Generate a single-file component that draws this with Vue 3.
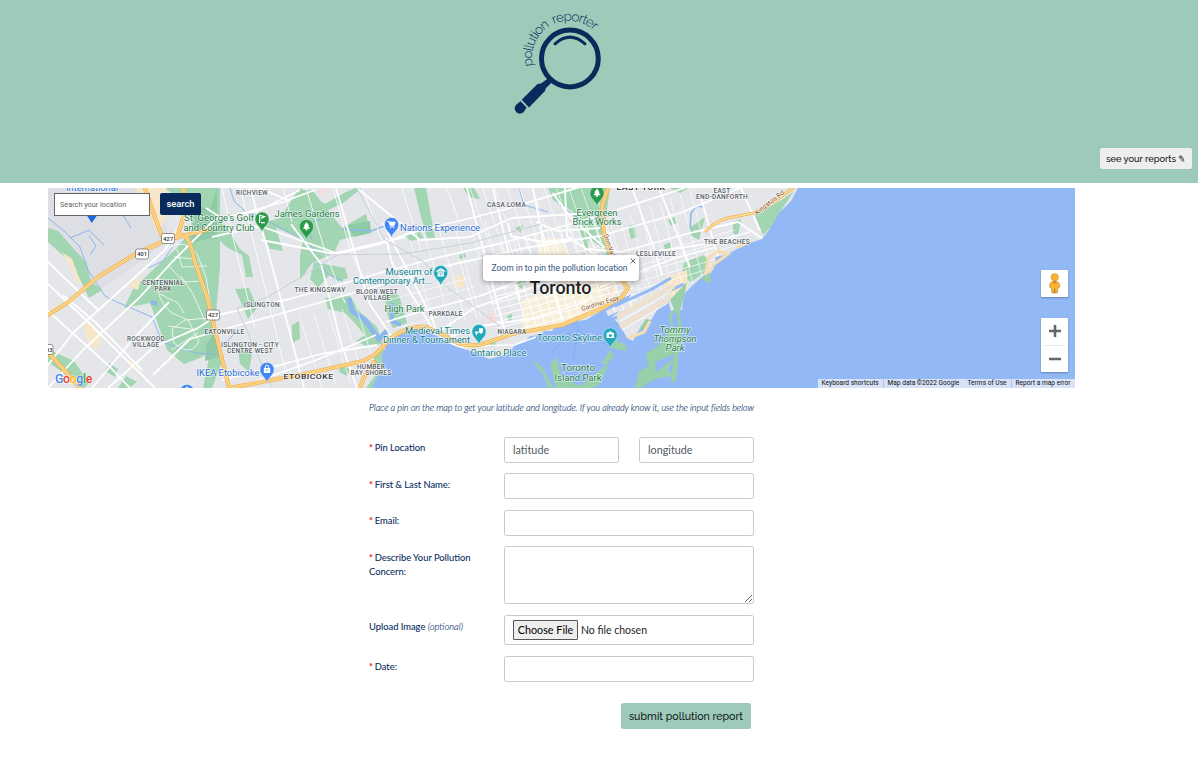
<script setup>
const labels = [
  { x: 92, y: 190.5, t: 'International', c: 'poi blue', w: 52 },
  { x: 219, y: 221, t: "St. George's Golf", c: 'poi green', w: 70 },
  { x: 219, y: 231, t: 'and Country Club', c: 'poi green', w: 71 },
  { x: 307, y: 217, t: 'James Gardens', c: 'poi green', w: 65 },
  { x: 252, y: 194.5, t: 'RICHVIEW', c: 'area', w: 32 },
  { x: 163, y: 285, t: 'CENTENNIAL', c: 'area', w: 42 },
  { x: 163, y: 291, t: 'PARK', c: 'area', w: 17 },
  { x: 146, y: 341, t: 'ROCKWOOD', c: 'area', w: 38 },
  { x: 146, y: 347, t: 'VILLAGE', c: 'area', w: 27 },
  { x: 262, y: 307, t: 'ISLINGTON', c: 'area', w: 36 },
  { x: 224.5, y: 333.5, t: 'EATONVILLE', c: 'area', w: 40 },
  { x: 250, y: 347, t: 'ISLINGTON - CITY', c: 'area', w: 58 },
  { x: 250, y: 353, t: 'CENTRE WEST', c: 'area', w: 46 },
  { x: 228, y: 376, t: 'IKEA Etobicoke', c: 'poi blue', w: 63 },
  { x: 308.5, y: 379, t: 'ETOBICOKE', c: 'big', w: 50 },
  { x: 320, y: 292, t: 'THE KINGSWAY', c: 'area', w: 51 },
  { x: 377, y: 294, t: 'BLOOR WEST', c: 'area', w: 42 },
  { x: 377, y: 300, t: 'VILLAGE', c: 'area', w: 27 },
  { x: 404.5, y: 312, t: 'High Park', c: 'poi green', w: 40 },
  { x: 445.5, y: 316, t: 'PARKDALE', c: 'area', w: 34 },
  { x: 440, y: 231, t: 'Nations Experience', c: 'poi blue', w: 80 },
  { x: 409, y: 274.5, t: 'Museum of', c: 'poi teal', w: 47 },
  { x: 392.5, y: 284, t: 'Contemporary Art...', c: 'poi teal', w: 79 },
  { x: 506.5, y: 206.5, t: 'CASA LOMA', c: 'area', w: 39 },
  { x: 437.5, y: 333.5, t: 'Medieval Times', c: 'poi teal', w: 65 },
  { x: 426.5, y: 343, t: 'Dinner & Tournament', c: 'poi teal', w: 87 },
  { x: 512, y: 333.5, t: 'NIAGARA', c: 'area', w: 29 },
  { x: 498.5, y: 356, t: 'Ontario Place', c: 'poi teal', w: 56 },
  { x: 371, y: 368.5, t: 'HUMBER', c: 'area', w: 28 },
  { x: 371, y: 374.5, t: 'BAY SHORES', c: 'area', w: 41 },
  { x: 597, y: 215.5, t: 'Evergreen', c: 'poi green', w: 41 },
  { x: 597, y: 225, t: 'Brick Works', c: 'poi green', w: 49 },
  { x: 641, y: 189.5, t: 'EAST YORK', c: 'area heavy', w: 49 },
  { x: 722, y: 192.5, t: 'EAST', c: 'area', w: 17 },
  { x: 722, y: 198.5, t: 'END-DANFORTH', c: 'area', w: 52 },
  { x: 727, y: 244, t: 'THE BEACHES', c: 'area', w: 46 },
  { x: 656, y: 256, t: 'LESLIEVILLE', c: 'area', w: 40 },
  { x: 560.5, y: 294.3, t: 'Toronto', c: 'city', w: 62 },
  { x: 569.5, y: 341, t: 'Toronto Skyline', c: 'poi teal', w: 65 },
  { x: 578, y: 371, t: 'Toronto', c: 'poi green', w: 34 },
  { x: 578, y: 380.5, t: 'Island Park', c: 'poi green', w: 47 },
  { x: 675, y: 332.5, t: 'Tommy', c: 'poi green slant', w: 31 },
  { x: 675, y: 341.5, t: 'Thompson', c: 'poi green slant', w: 43 },
  { x: 675, y: 351, t: 'Park', c: 'poi green slant', w: 19 },
]
const pins = [
  { x: 262, y: 219, c: '#2c9a4b', k: 'golf' },
  { x: 306.5, y: 226.5, c: '#2c9a4b', k: 'tree' },
  { x: 597, y: 193, c: '#2c9a4b', k: 'tree' },
  { x: 391.5, y: 224.5, c: '#4285f4', k: 'cart' },
  { x: 440.7, y: 272.5, c: '#20a8bb', k: 'museum' },
  { x: 479, y: 331.5, c: '#20a8bb', k: 'masks' },
  { x: 610.3, y: 335, c: '#20a8bb', k: 'camera' },
  { x: 267, y: 369.5, c: '#4285f4', k: 'bag' },
  { x: 187, y: 391.5, c: '#4285f4', k: 'bag' },
]
const shields = [
  { x: 168, y: 238.5, t: '427', w: 13 },
  { x: 142, y: 254, t: '401', w: 13 },
  { x: 213, y: 315, t: '427', w: 13 },
  { x: 47.5, y: 349.5, t: '403', w: 11 },
]
// A run of parallel streets: count lines, each shifted by (sx, sy) from the first.
function run(x1, y1, x2, y2, sx, sy, count) {
  let d = ''
  for (let i = 0; i < count; i++) d += `M${x1 + sx * i} ${y1 + sy * i}L${x2 + sx * i} ${y2 + sy * i}`
  return d
}
const downtown =
  run(488, 292, 625, 258, 1.6, 6, 8) +
  run(500, 243, 530, 334, 8.5, -2.2, 13) +
  run(540, 262, 600, 246, 1.4, 5, 4)
const minor =
  run(385, 301, 470, 278, 4, 9, 4) +
  run(410, 240, 436, 330, 15, -4, 6) +
  run(470, 188, 496, 262, 12, -1, 11) +
  run(610, 222, 634, 312, 10, -4, 9) +
  run(625, 262, 735, 230, 3, 7, 5) +
  run(300, 318, 322, 388, 14, -3, 5)
const fields = ['latitude', 'longitude']
</script>

<template>
  <div class="page">
    <header class="top">
      <svg class="logo" viewBox="500 0 120 120" width="120" height="120">
        <path id="arc" d="M532.9 66A37 37 0 0 1 603.8 45.3" fill="none" />
        <text class="brand"><textPath href="#arc">pollution reporter</textPath></text>
        <circle cx="569.9" cy="58.5" r="28.4" fill="none" stroke="#082b5c" stroke-width="5" />
        <path d="M555 43.8Q570 30.5 585 43.8" fill="none" stroke="#082b5c" stroke-width="3" stroke-linecap="round" />
        <path d="M549.3 77.5L553 81.2L545.8 88.2L545 91L529 107.4L521.7 99.8L537.5 84L541 83.6Z" fill="#082b5c" />
        <path d="M520.6 101.2L526.6 107.4L524.4 111A5.2 5.2 0 1 1 517 104.1Z" fill="#082b5c" />
      </svg>
      <button class="reports">see your reports <span class="pencil">✎</span></button>
    </header>

    <section class="map">
      <svg class="canvas" viewBox="48 188 1027 200" width="1027" height="200">
        <rect x="48" y="188" width="1027" height="200" fill="#e4e6ea" />
        <path d="M48 188H155L170 240L100 290L72 252L48 235Z" fill="#dddfe5" />

        <g fill="#a2d5b2">
          <path d="M48 228L58 231L72 247L86 262L91 281L102 290L89 298L78 275L67 259L48 242Z" />
          <path d="M164 188H220V266L213 350L200 358L184 364L167 350L160 330L150 303L124 308L133 289L157 266L176 249L192 229L190 205Z" />
          <path d="M218 219L231 233L239 248L249 256L253 277L246 277L242 255L228 248L218 239Z" />
          <path d="M259 224L280 218L298 190H312L323 204L342 228L366 214L370 232L340 240L334 253L312 263L300 280V256L303 239L276 228L283 251L270 249Z" />
          <path d="M314 262L345 268L348 278L337 282L330 274L318 288L310 279Z" />
          <path d="M325 298L350 296L360 312L377 327L383 344L366 346L356 341L365 335L352 320L345 313L328 309Z" />
          <path d="M384 292L399 295L407 323L393 328L388 317Z" />
          <path d="M414 188H426L435 238L427 238L420 213Z" />
          <path d="M300 188L325 204L346 192L355 188H362L343 203L322 213L300 207Z" />
          <path d="M548 188H610L604 231L614 252L608 269L602 248L589 238L588 253L581 238L572 211L553 200Z" />
          <path d="M763 235L755 215L783 199L794 191L782 209L774 224Z" />
          <path d="M670 188H688L680 193ZM628 227L634 224L637 237L631 239ZM664 245L670 242L671 253L665 251Z" />
          <path d="M684 263L703 254L710 263L704 273L691 282L681 276Z" />
          <path d="M48 349L74 361L89 383L84 388H77L65 374L48 362ZM109 363L118 369L115 377L105 371ZM126 376L137 382L129 388H118Z" />
          <path d="M235 289L249 288L257 308L248 319L243 307ZM210 353L224 356L212 388H203Z" />
          <path d="M373 354L384 349L386 362L378 384L372 388H366L377 373Z" />
          <path d="M238 349L252 354L249 372L240 364ZM340 366L350 368L347 376L339 372ZM292 325L299 321L300 339L292 343Z" />
          <path d="M691 227L705 217L699 240L690 235ZM463 188L474 188L480 199L469 197ZM520 278L526 282L522 289L516 284Z" />
          <path d="M406 236L420 232L424 238L410 241ZM458 256L465 253L466 257L459 260ZM515 228L523 225L521 233Z" />
          <path d="M507 316L512 314L512 320L508 321ZM489 342L495 340L496 346L490 347ZM668 220L675 217L677 223L671 226ZM733 222L741 219L738 236L733 233Z" />
        </g>
        <g fill="#8fcaa7">
          <path d="M196 205L210 210L217 188V239L210 238L190 244ZM206 345L217 329L219 357L205 361Z" />
          <path d="M348 225L370 221L371 233L354 237Z" />
        </g>
        <g fill="#f7e7ca">
          <path d="M135 188H166L171 207L158 235L149 211ZM62 252L72 259L83 288L77 281Z" />
          <path d="M83 326L91 322L102 337L97 350L89 344ZM128 286L142 275L138 290ZM127 358L138 366L134 371Z" />
          <path d="M455 276L463 275L464 286L456 288ZM665 277L687 270L688 289L673 298L665 294Z" />
        </g>
        <g fill="#f8efd9">
          <path d="M522 300L545 292L605 269L618 291L607 309L577 321L530 333L522 325Z" />
          <path d="M539 240L556 237L570 255L566 274L552 276L537 259Z" />
        </g>
        <path d="M552 283L615 264L640 256L612 290Z" fill="#eee1d0" />
        <path d="M487 315L496 313V321L488 323ZM316 190L326 188L322 197ZM603 291L613 290L610 299Z" fill="#f4dcdc" />

        <g fill="none" stroke="#8cb7ee" stroke-width="1">
          <path d="M48 218L64 231L80 247L88 270L105 296L117 302L152 317L162 342L191 352L214 355L238 330" />
          <path d="M70 238L89 230L104 245M89 236L96 246L90 255M103 198L118 207L131 228M148 268L163 261L174 245" />
          <path d="M230 188L234 201L246 212L258 216L285 230L311 245L318 262L329 275L343 281M312 240L306 224L322 219" />
          <path d="M343 229L371 231L390 224M690 230L691 213L697 206L703 207" stroke-width="1.6" />
          <path d="M349 298L352 311L365 320L372 330L379 339L388 330" stroke-width="5" />
          <path d="M392 303V321L401 325M151 302L157 304" stroke-width="4" />
          <path d="M519 188L524 205L548 212M560 205L583 222L604 215" />
        </g>

        <g fill="none" stroke="#fff" opacity=".85">
          <path :d="minor" stroke-width=".8" />
          <path :d="downtown" stroke-width="1.2" />
          <path stroke-width=".9" d="M169 248Q185 238 197 254L206 277L211 307L219 349M174 257L194 259L203 290M159 278Q154 299 172 313L188 320L199 341Q191 358 174 343L172 329L185 320L209 318M160 294L178 303L184 313M181 276L193 294L205 321M169 266L184 282L202 281M177 249L182 267L207 266M168 326L198 330M171 350L198 333" />
          <path stroke-width="1" d="M222 188L237 255L255 328M240 188L260 267L286 374M283 188L292 222M306 188L325 251L345 303M333 188L351 253L375 300M362 188L383 243M402 188L421 250M447 188L458 219M458 255L477 319" />
        </g>
        <g fill="none" stroke="#fff" stroke-width="1.8" stroke-linejoin="round">
          <path d="M48 284L86 320L155 388M48 311L109 366L130 388M63 295L95 322L142 370M48 365L74 332L143 270L165 250L177 230M92 388L133 339L169 302M108 388L154 347L198 328L218 315L290 299L383 272L440 257L502 243L592 218L660 196L685 188" />
          <path d="M48 262L98 310M153 375L190 339L214 332L290 311L350 294L446 266L525 248L600 236L680 213L714 199L740 188" />
          <path d="M48 388L83 350L139 298L172 262L215 219L260 210L300 190M206 208L223 219L290 200M212 237L260 226L336 253L405 237" />
          <path d="M250 188L267 247L291 337L304 388M291 224L321 264L341 343L357 388M336 188L369 303L392 337M261 240L335 254L380 244L410 233L503 210L600 181" />
          <path d="M357 188L405 227L420 240L470 237L487 229L512 218L590 213" />
          <path d="M386 238L392 263L433 329M383 223L430 314L438 334M467 188L505 332M493 188L520 300M533 188L548 266L562 320M565 188L567 236L603 260M588 249L621 252L694 232L738 222L763 239M632 188L655 251L662 275M659 188L690 267" />
          <path d="M700 194L716 251L719 263M741 188L760 231M589 264L625 256L700 245L750 232M600 287L675 258L713 248" />
          <path d="M383 345L430 337L476 307L541 285L618 263M386 322L430 309L480 296L531 276M426 345L482 326L534 318L588 301" />
          <path d="M259 188L288 200L315 190M222 380L284 364L321 354L377 345M254 382L314 361L376 335" />
          <path d="M536 222L557 231L600 228M508 223L511 236L543 242L572 239M553 193L570 217L605 248" />
        </g>
        <path d="M357 188L384 239L424 262L447 287L500 326M321 255L404 254L470 243L541 224M272 388L237 308L268 297L337 255" fill="none" stroke="#cbd0d7" stroke-width="1" />

        <!-- lake -->
        <path fill="#92b9f6" d="M798 188L791 201L779 213L769 230L762 239L750 243L737 249L728 254L716 257L713 270L703 276L693 285L684 294L682 310L671 311L668 300L657 310L650 322L638 331L633 341L627 338L620 325L612 317L620 311L608 316L606 311L628 300L631 294L604 309L586 320L576 321L573 323L566 322L563 327L557 325L552 331L544 331L541 335L530 336L524 342L514 346L509 354L489 359L477 353L457 347L443 339L427 331L413 328L399 335L387 344L382 355L383 366L391 373L378 375L372 388H1075V188Z" />
        <path d="M611 320L656 297L684 284M615 306L652 289L671 278" stroke="#92b9f6" stroke-width="3" fill="none" />
        <path d="M620 327L672 297M617 317L674 286" stroke="#eee1d0" stroke-width="5" fill="none" />
        <path d="M620 321L640 310L672 290M622 330L668 303" stroke="#fff" stroke-width="1" fill="none" />
        <g fill="#98d0aa">
          <path d="M670 300L687 282L684 297L680 311L682 339L679 351L676 382L671 382L673 361L668 369L672 376L655 379L640 388H635L639 371L648 367L646 353L658 346L671 328L669 315L674 309Z" />
          <path d="M613 339L626 345L626 351L611 348ZM601 364L610 350L614 356L607 364ZM550 364L557 357L561 377L580 386L600 370L609 363L600 384L592 388H556Z" />
          <path d="M531 359L544 376L548 388H554L542 367Z" />
          <path d="M701 278L710 273L711 284L704 281ZM639 329L646 319L651 320L646 330Z" />
        </g>
        <g fill="#92b9f6">
          <path d="M672 314L677 312L678 325L673 332ZM675 354L672 360L656 372L655 362Z" />
        </g>
        <path d="M628 338L644 332L650 321M706 275L708 258L718 251L728 254L713 265L709 273M750 242L737 247" stroke="#f5deb1" stroke-width="3" fill="none" />
        <path d="M508 350L492 355L478 350" stroke="#efe4cc" stroke-width="4" fill="none" />
        <path d="M571 325L578 323L579 332L610 346M577 326L550 355M578 329L573 360" fill="none" stroke="#6c9ce8" stroke-width=".7" stroke-dasharray="2 1.5" />
        <path d="M440 337Q457 350 475 346L514 345L536 337" fill="none" stroke="#fff" stroke-width="1.5" />

        <!-- motorways: dark casing, light core, centre line -->
        <g fill="none" stroke-linejoin="round" stroke-linecap="round">
          <g stroke="#f4b04a" stroke-width="4.2">
            <path id="h1" d="M48 315L67 303L98 277L132 256L164 241L190 234L210 229M145 188L155 218L162 236L184 235Q191 241 194 259L207 297L218 343L229 388M183 188L186 210L178 234" />
            <path id="h2" d="M48 352L65 371L80 388M229 388L305 374L363 361L376 354L388 341Q405 325 426 327L444 335Q462 349 483 344L512 334L562 325L600 309L622 297L628 288L622 280L614 263L604 235L602 206L608 188M360 388L364 377L374 362" />
          </g>
          <g stroke="#fce2a0" stroke-width="2.5"><use href="#h1" /><use href="#h2" /></g>
          <g stroke="#f4b04a" stroke-width=".7"><use href="#h1" /><use href="#h2" /></g>
          <path d="M706 231Q718 218 738 216L754 213L775 201L793 188" stroke="#f4b04a" stroke-width="3" />
          <path d="M706 231Q718 218 738 216L754 213L775 201L793 188" stroke="#fce2a0" stroke-width="1.5" />
        </g>

        <g v-for="s in shields" :key="s.x">
          <rect :x="s.x - s.w / 2" :y="s.y - 5" :width="s.w" height="10" rx="2" fill="#fff" stroke="#777" stroke-width=".8" />
          <text class="shield" :x="s.x" :y="s.y + 2.3">{{ s.t }}</text>
        </g>

        <path d="M87 215.5H97L91.7 223Z" fill="#1a66de" />
        <g v-for="p in pins" :key="p.x" :transform="`translate(${p.x} ${p.y})`">
          <path d="M0 13C-1.2 7.8-7 5.8-7 0A7 7 0 0 1 7 0C7 5.8 1.2 7.8 0 13Z" :fill="p.c" stroke="#fff" stroke-opacity=".55" stroke-width=".6" />
          <path v-if="p.k === 'tree'" d="M0-4.6L2.7-.6H1.7L3.6 2.3H.8V4H-.8V2.3H-3.6L-1.7-.6H-2.7Z" fill="#fff" />
          <path v-else-if="p.k === 'golf'" d="M-2.4 4V-3.8L2.6-2.4L-1.1-.5M-1 3.6H2.8" fill="none" stroke="#fff" stroke-width="1.2" />
          <path v-else-if="p.k === 'cart'" d="M-4-3.2H-2.7L-1.4.7H2.7L3.7-2.4H-2.3ZM-1.8 2.3H3M-1.2 3.6H-.6M2 3.6H2.6" fill="#fff" stroke="#fff" stroke-width="1" />
          <path v-else-if="p.k === 'museum'" d="M-3.6-1.6L0-3.8L3.6-1.6ZM-3.4 3.4H3.4M-2.5-.8V3M2.5-.8V3M-1 3V.3H1V3" fill="none" stroke="#fff" stroke-width="1.1" />
          <path v-else-if="p.k === 'masks'" d="M-4 .1H-.2V2Q-2-.1-2 4Q-4 3.3-4 .1ZM0-3.2H4V-.4Q4 2 2 2.3Q0 2 0-.4Z" fill="#fff" />
          <g v-else-if="p.k === 'camera'"><path d="M-3.8-2.2H-2L-1-3.4H1L2-2.2H3.8V3H-3.8Z" fill="#fff" /><circle cy=".4" r="1.5" :fill="p.c" /></g>
          <g v-else><rect x="-3.2" y="-1.4" width="6.4" height="4.8" rx=".6" fill="#fff" /><path d="M-1.7-1.4V-2.6A1.7 1.7 0 0 1 1.7-2.6V-1.4" fill="none" stroke="#fff" stroke-width="1" /><path d="M-1.4.2Q0 2 1.4.2" fill="none" :stroke="p.c" stroke-width=".7" /></g>
        </g>

        <text v-for="l in labels" :key="l.t + l.y" :x="l.x" :y="l.y" :textLength="l.w" lengthAdjust="spacingAndGlyphs" :class="l.c">{{ l.t }}</text>
        <text class="road" transform="translate(757 215) rotate(-38)" textLength="35">Kingston Rd</text>
        <text class="road" transform="translate(582 311) rotate(-17)" textLength="39">Gardiner Expy</text>
        <text class="road" transform="translate(603.5 235) rotate(71)" textLength="31">Don Valley</text>
      </svg>

      <div class="search">
        <input type="text" placeholder="Search your location" />
        <button>search</button>
      </div>
      <div class="bubble">Zoom in to pin the pollution location
        <svg class="close" viewBox="0 0 6 6" width="6" height="6"><path d="M.6.6L5.4 5.4M5.4.6L.6 5.4" stroke="#444" stroke-width=".8" /></svg>
      </div>
      <div class="google"><i class="b">G</i><i class="r">o</i><i class="y">o</i><i class="b">g</i><i class="g">l</i><i class="r">e</i></div>
      <div class="controls">
        <div class="ctl">
          <svg viewBox="0 0 27 27" width="27" height="27">
            <path d="M10.3 12Q8.2 14 8.6 17L10.5 18.2L11 23H16.3L16.8 18.2L18.8 17Q19 14 17 12Z" fill="#fbb52d" stroke="#a78142" stroke-width=".6" />
            <path d="M11.5 10.8L13.7 14L16 10.8Z" fill="#e8792b" />
            <circle cx="13.7" cy="7.2" r="3.7" fill="#fbb52d" stroke="#b88a3c" stroke-width=".5" />
            <path d="M13.7 18.5V23" stroke="#a36c22" stroke-width=".8" />
          </svg>
        </div>
        <div class="ctl zoom">
          <svg viewBox="0 0 27 54" width="27" height="54">
            <path d="M8 13H20M14 7V19M8 41H20" stroke="#666" stroke-width="2.6" />
            <path d="M4 27.5H24" stroke="#e6e6e6" stroke-width="1" />
          </svg>
        </div>
      </div>
      <div class="credits"><span>Keyboard shortcuts</span><span>Map data ©2022 Google</span><span>Terms of Use</span><span>Report a map error</span></div>
    </section>

    <form class="form">
      <p class="hint">Place a pin on the map to get your latitude and longitude. If you already know it, use the input fields below</p>
      <div class="row">
        <label><b>*</b> Pin Location</label>
        <div class="pair"><input v-for="f in fields" :key="f" type="text" :placeholder="f" /></div>
      </div>
      <div class="row"><label><b>*</b> First &amp; Last Name:</label><input type="text" /></div>
      <div class="row"><label><b>*</b> Email:</label><input type="text" /></div>
      <div class="row"><label><b>*</b> Describe Your Pollution Concern:</label><textarea></textarea></div>
      <div class="row"><label class="upload">Upload Image <em>(optional)</em></label>
        <div class="file"><span class="choose">Choose File</span><span>No file chosen</span></div>
      </div>
      <div class="row"><label><b>*</b> Date:</label><input type="text" /></div>
      <button class="submit" type="button">submit pollution report</button>
    </form>
  </div>
</template>

<style>
html, body { background: #fff; overflow: hidden; }
</style>

<style scoped>
* { box-sizing: border-box; }
.page { width: 1198px; height: 764px; overflow: hidden; font-family: "Lato", sans-serif; color: #082b5c; }
button, input, textarea { font-family: inherit; margin: 0; }
.top { height: 183px; background: #9ecaba; display: flex; flex-direction: column; justify-content: space-between; padding-bottom: 14px; }
.logo { display: block; margin-left: 500px; }
.brand { font: 300 13.4px "Raleway", "Lato", sans-serif; word-spacing: 2.5px; letter-spacing: -.9px; fill: #082b5c; }
.reports { align-self: flex-end; margin-right: 6px; width: 92px; height: 21px; padding: 0; border: 0; border-radius: 2px; background: #eee; color: #111; font: 500 9.25px/21px "Raleway", "Lato", sans-serif; white-space: nowrap; }
.pencil { display: inline-block; font: 9px "DejaVu Sans", sans-serif; transform: rotate(8deg); }

.map { position: relative; width: 1027px; height: 200px; margin: 5px 0 0 48px; font-family: "Roboto", sans-serif; overflow: hidden; }
.canvas { display: block; }
.canvas text { text-anchor: middle; paint-order: stroke; stroke: #fff; stroke-opacity: .7; stroke-width: 1.4px; stroke-linejoin: round; font-family: "Roboto", sans-serif; }
.canvas .area { font-size: 6.4px; font-weight: 500; letter-spacing: .3px; fill: #555b63; }
.canvas .heavy { font-size: 7px; fill: #222; }
.canvas .big { font-size: 7.6px; font-weight: 500; letter-spacing: .4px; fill: #333; }
.canvas .city { font-size: 17.5px; font-weight: 500; fill: #202124; }
.canvas .poi { font-size: 9.6px; }
.canvas .blue { fill: #2a6bd6; }
.canvas .green { fill: #1b7b46; }
.canvas .teal { fill: #0c7d8e; }
.canvas .slant { font-style: italic; }
.canvas .shield { font-size: 6px; font-weight: 500; fill: #333; }
.canvas .road { font-size: 6.5px; fill: #844c20; text-anchor: start; }

.search { position: absolute; left: 6px; top: 5px; display: flex; gap: 10px; align-items: flex-start; }
.search input { width: 96px; height: 23px; border: 1px solid #666; padding: 0 5px; font-size: 7.3px; background: #fff; border-radius: 0; }
.search input::placeholder { color: #666; }
.search button { width: 41px; height: 22px; border: 0; border-radius: 2px; padding: 0 0 1px; background: #082b5c; color: #fff; font-size: 9.3px; font-weight: 500; }
.bubble { position: absolute; left: 435px; top: 67px; width: 156px; height: 26px; padding-left: 8.5px; border-radius: 4px; background: #fff; box-shadow: 0 1px 4px 1px rgba(0, 0, 0, .3); font-size: 8.53px; line-height: 26px; color: #36517e; white-space: nowrap; }
.close { position: absolute; right: 3px; top: 2.5px; }
.google { position: absolute; left: 7px; top: 182px; font: 500 12.4px/18px "Roboto", sans-serif; letter-spacing: -.4px; text-shadow: 0 0 1px #fff, 0 0 2px #fff; }
.google i { font-style: normal; }
.b { color: #4285f4; } .r { color: #ea4335; } .y { color: #fbbc05; } .g { color: #34a853; }
.controls { position: absolute; right: 7px; top: 82px; display: flex; flex-direction: column; gap: 21px; }
.ctl { width: 27px; height: 27px; background: #fff; border-radius: 1px; box-shadow: 0 1px 2px rgba(0, 0, 0, .3); }
.zoom { height: 54px; }
.ctl svg { display: block; }
.credits { position: absolute; right: 0; bottom: 0; width: 257px; height: 9px; display: flex; background: #d7e2f7; font-size: 6.6px; line-height: 8.5px; color: #111; white-space: nowrap; }
.credits span { padding-left: 3.5px; width: 65px; }
.credits span:nth-child(2) { width: 80px; border-left: 1px solid #a9c3ee; }
.credits span:nth-child(3) { width: 48px; padding-left: 4.5px; }
.credits span:nth-child(4) { width: 64px; border-left: 1px solid #a9c3ee; }

.form { width: 385px; margin-left: 369px; padding-top: 14px; display: flex; flex-direction: column; }
.hint { margin: 0 0 22.6px; font-size: 9.2px; line-height: 12px; font-style: italic; font-weight: 300; letter-spacing: -.09px; color: #2b4b7a; -webkit-text-stroke: .15px #2b4b7a; white-space: nowrap; }
.row { display: flex; justify-content: space-between; align-items: flex-start; margin-bottom: 10.6px; }
label { width: 115px; padding-top: 4.4px; font-size: 9.4px; line-height: 14px; font-weight: 400; word-spacing: -.15px; -webkit-text-stroke: .08px #082b5c; }
.upload { padding-top: 5px; }
label b { color: #e3172d; font-weight: 700; letter-spacing: -.5px; -webkit-text-stroke: 0; }
label em { font-weight: 300; color: #2b4b7a; -webkit-text-stroke: .15px #2b4b7a; }
.row input, textarea, .file { width: 250px; height: 26px; padding: 0 8px; border: 1px solid #c2cad2; border-radius: 2.5px; background: #fff; font-size: 10.8px; outline: 0; }
.row input { padding-bottom: 1px; }
.pair { display: flex; gap: 20px; width: 250px; }
.row .pair input { width: 115px; }
.row input::placeholder { color: #50585f; }
.row textarea { display: block; height: 58px; resize: both; }
.file { height: 30px; display: flex; align-items: center; gap: 3px; color: #212529; font-size: 10.5px; }
.choose { width: 65px; height: 20px; line-height: 18px; font-size: 10.8px; border: 1px solid #555; background: #eee; color: #000; text-align: center; white-space: nowrap; border-radius: 1px; }
.submit { align-self: flex-end; margin: 10.5px 3px 0 0; width: 130px; height: 26px; padding: 0; border: 0; border-radius: 2.5px; background: #9ecaba; color: #121c20; font: 500 10.6px/26px "Raleway", "Lato", sans-serif; }
</style>
